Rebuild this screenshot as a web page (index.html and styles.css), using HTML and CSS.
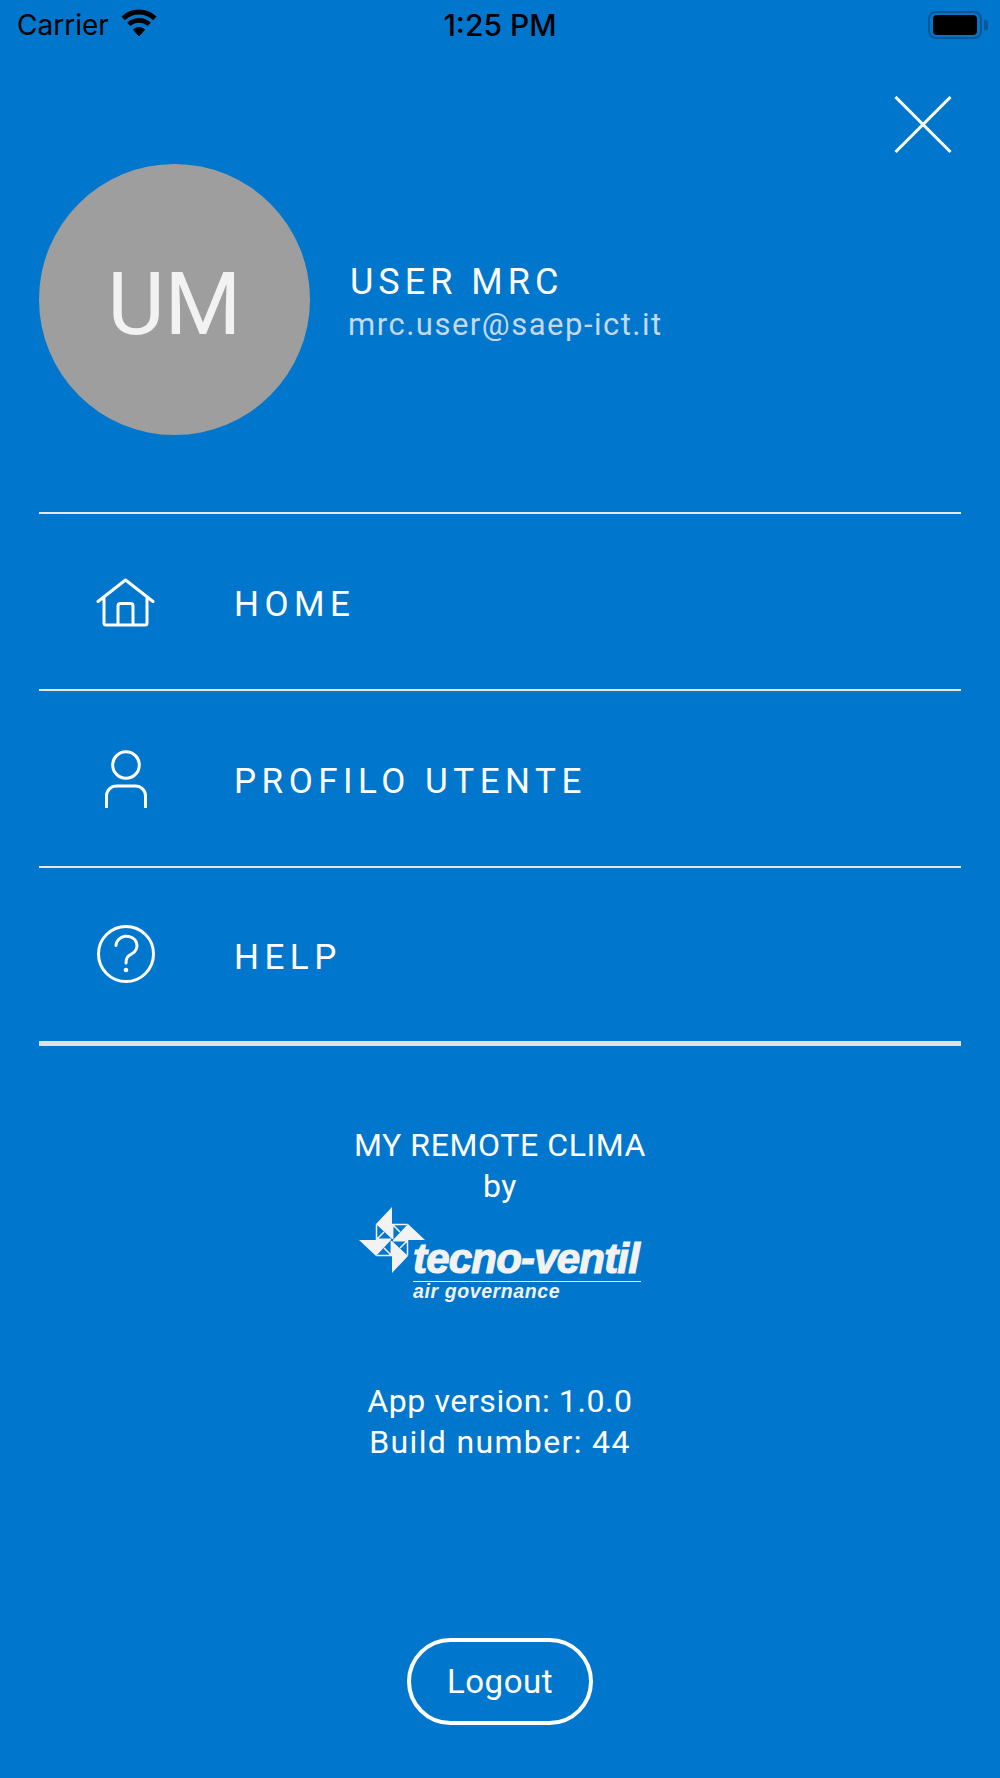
FILE: index.html
```html
<!DOCTYPE html>
<html lang="it">
<head>
<meta charset="utf-8">
<title>My Remote Clima</title>
<link rel="stylesheet" href="styles.css">
</head>
<body>
<div class="page">
  <header class="status">
    <div class="status-left">
      <span class="carrier">Carrier</span>
      <svg class="wifi" viewBox="0 0 38 28" width="38" height="28"><path d="M19 27 L13.400 20.600 A8.600 8.600 0 0 1 24.600 20.600 Z" fill="#000" stroke="#000" stroke-linejoin="round"/><path d="M8.800 15.400 A15 15 0 0 1 29.200 15.400" fill="none" stroke="#000" stroke-width="4.600"/><path d="M3.200 9.400 A23 23 0 0 1 34.800 9.400" fill="none" stroke="#000" stroke-width="5"/></svg>
    </div>
    <div class="clock">1:25 PM</div>
    <div class="status-right">
      <svg viewBox="0 0 60 28" width="60" height="28"><rect x="1" y="1" width="52" height="26" rx="7" fill="none" stroke="#0b5797" stroke-width="2"/><rect x="5" y="4" width="44" height="20" rx="4" fill="#000"/><path d="M56 8.500 a5.500 5.500 0 0 1 0 11 Z" fill="#0b5797"/></svg>
    </div>
  </header>

  <div class="close-row">
    <svg class="close" viewBox="0 0 58 58" width="58" height="58"><path d="M1.500 1 L56.500 56 M56.500 1 L1.500 56" stroke="#fff" stroke-width="3" fill="none"/></svg>
  </div>

  <section class="profile">
    <div class="avatar">UM</div>
    <div class="who">
      <div class="name">USER MRC</div>
      <div class="mail">mrc.user@saep-ict.it</div>
    </div>
  </section>

  <nav class="menu">
    <a class="row">
      <span class="ico"><svg viewBox="0 0 60 50" width="60" height="50"><path d="M2 23.500 L29.500 2 L57 23.500 M8 19.500 V45 a2 2 0 0 0 2 2 H49 a2 2 0 0 0 2 -2 V19.500 M22 47 V28 a2.500 2.500 0 0 1 2.500 -2.500 H34.500 a2.500 2.500 0 0 1 2.500 2.500 V47" fill="none" stroke="#fff" stroke-width="3" stroke-linecap="round" stroke-linejoin="round"/></svg></span>
      <span class="label">HOME</span>
    </a>
    <a class="row">
      <span class="ico"><svg viewBox="0 0 44 60" width="44" height="60"><circle cx="22" cy="15" r="13.300" fill="none" stroke="#fff" stroke-width="3"/><path d="M2.500 58 V46 a10 10 0 0 1 10 -10 H31.500 a10 10 0 0 1 10 10 V58" fill="none" stroke="#fff" stroke-width="3"/></svg></span>
      <span class="label">PROFILO UTENTE</span>
    </a>
    <a class="row">
      <span class="ico"><svg viewBox="0 0 60 60" width="60" height="60"><circle cx="30" cy="30" r="27.500" fill="none" stroke="#fff" stroke-width="3"/><path d="M20 21.500 a10.500 9.500 0 1 1 15.500 8.500 c-3.500 2 -5.500 3.500 -5.500 9" fill="none" stroke="#fff" stroke-width="3" stroke-linecap="round"/><circle cx="30" cy="46" r="2.300" fill="#fff"/></svg></span>
      <span class="label">HELP</span>
    </a>
  </nav>

  <footer class="about">
    <div class="line">MY REMOTE CLIMA</div>
    <div class="line">by</div>
    <div class="logo">
      <svg class="mark" viewBox="-34 -33 68 67" width="68" height="67">
        <defs>
          <g id="blade">
            <polygon points="0,-33 0,-1 -16,-16" fill="#f2f2f2"/>
            <path d="M-15.500 -15.500 V-0.700 H-1 M-15 -1 L-8 -8" fill="none" stroke="#f2f2f2" stroke-width="1.500"/>
          </g>
        </defs>
        <use href="#blade"/>
        <use href="#blade" transform="rotate(90)"/>
        <use href="#blade" transform="rotate(180)"/>
        <use href="#blade" transform="rotate(270)"/>
      </svg>
      <div class="brand">tecno-ventil</div>
      <div class="tag">air governance</div>
    </div>
    <div class="version">
      <div class="line">App version: 1.0.0</div>
      <div class="line build">Build number: 44</div>
    </div>
    <button class="logout">Logout</button>
  </footer>
</div>
</body>
</html>
```
FILE: styles.css
```css
* { box-sizing: border-box; }
html, body { margin: 0; padding: 0; }
body { background: #0077cd; font-family: Roboto, "Noto Sans", sans-serif; color: #fff; }
.page { width: 1000px; height: 1778px; display: flex; flex-direction: column; background: #0077cd; }

.status { height: 50px; display: grid; grid-template-columns: 1fr auto 1fr; align-items: center; padding: 0 12px 0 17px; color: #000; }
.status-left { display: flex; align-items: center; gap: 11px; }
.carrier { font-family: Inter, "Liberation Sans", sans-serif; font-size: 28px; }
.wifi { display: block; margin-top: -4px; }
.clock { font-family: Inter, "Liberation Sans", sans-serif; font-size: 30px; font-weight: 500; margin-right: 5px; }
.status-right { display: flex; justify-content: flex-end; }

.close-row { display: flex; justify-content: flex-end; padding: 46px 48px 0 0; }
.close { display: block; }

.profile { display: flex; align-items: center; gap: 38px; margin: 10px 0 0 39px; height: 271px; }
.avatar { width: 271px; height: 271px; border-radius: 50%; background: #9e9e9e; color: #f2f2f2; display: flex; align-items: center; justify-content: center; font-size: 88px; font-weight: 400; flex: none; padding-top: 8px; }
.who { margin-top: 7px; }
.name { font-size: 36px; letter-spacing: 5px; line-height: 44px; margin-left: 2px; }
.mail { font-size: 31px; line-height: 42px; color: #c4d9ea; letter-spacing: 1.5px; }

.menu { margin: 77px 39px 0; border-top: 2px solid #e6e6e6; border-bottom: 5px solid #e0e0e0; }
.row { display: flex; align-items: center; height: 177px; border-bottom: 2px solid #e6e6e6; }
.row:last-child { border-bottom: 0; height: 173px; }
.ico { width: 174px; display: flex; justify-content: center; flex: none; margin-top: 3px; }
.row:last-child .ico { margin-top: -2px; }
.ico svg { display: block; }
.label { font-size: 35px; letter-spacing: 5.5px; margin-left: 21px; padding-top: 5px; }

.about { flex: 1; display: flex; flex-direction: column; align-items: center; padding-top: 79px; font-size: 32px; }
.line { line-height: 41px; text-align: center; letter-spacing: 0.6px; }
.build { letter-spacing: 1.35px; }
.logo { width: 290px; height: 100px; position: relative; }
.mark { position: absolute; left: 3px; top: 0; }
.brand { position: absolute; left: 58px; top: 30px; font-family: "Liberation Sans", sans-serif; font-weight: 700; font-style: italic; font-size: 42px; line-height: 44px; letter-spacing: -0.8px; color: #f2f2f2; -webkit-text-stroke: 1.2px #f2f2f2; border-bottom: 1.5px solid #f2f2f2; width: 228px; white-space: nowrap; }
.tag { position: absolute; left: 58px; top: 73px; font-family: "Liberation Sans", sans-serif; font-weight: 700; font-style: italic; font-size: 19.500px; line-height: 22px; letter-spacing: 0.6px; color: #f2f2f2; white-space: nowrap; }
.version { margin-top: 74px; }
.logout { margin-top: 175px; width: 186px; height: 87px; border: 4.500px solid #fff; border-radius: 44px; background: transparent; color: #fff; font-family: Roboto, sans-serif; font-size: 33px; letter-spacing: 0.5px; }
```
